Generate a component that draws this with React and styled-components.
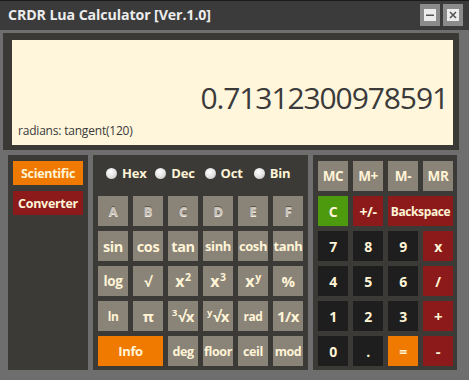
import React from 'react';
import styled, { createGlobalStyle, css } from 'styled-components';

const GlobalStyle = createGlobalStyle`
  html, body {
    margin: 0;
    padding: 0;
    background: #6e6e6e;
  }
  body {
    font-family: "Open Sans", "Noto Sans", sans-serif;
  }
`;

const Window = styled.div`
  width: 469px;
  height: 380px;
  background: #6e6e6e;
  display: flex;
  flex-direction: column;
  overflow: hidden;
`;

const TitleBar = styled.div`
  height: 30px;
  background: #3b3b3b;
  display: flex;
  align-items: center;
  justify-content: space-between;
  padding: 0 6px 0 8px;
  border-top: 1px solid #1a1a1a;
  box-sizing: border-box;
`;

const Title = styled.div`
  color: #ececec;
  font-weight: 700;
  font-size: 14.2px;
  letter-spacing: -0.1px;
  margin-top: -3px;
`;

const TitleButtons = styled.div`
  display: flex;
  gap: 3px;
  margin-top: -2px;
`;

const TitleButton = styled.div`
  width: 20px;
  height: 22px;
  background: #8b8b8b;
  display: flex;
  align-items: center;
  justify-content: center;
`;

const TitleGlyph = styled.div`
  width: 12px;
  height: 12px;
  background: #ececec;
  display: flex;
  align-items: center;
  justify-content: center;
`;

const Display = styled.div`
  margin: 3px 10px 0 3px;
  border-style: solid;
  border-color: #3a3935;
  border-width: 7px 6px 5px 9px;
  background: #fff6dc;
  height: 105px;
  display: flex;
  flex-direction: column;
  color: #3a3a3a;
`;

const Value = styled.div`
  margin-top: 43px;
  padding-right: 5px;
  text-align: right;
  font-size: 30px;
  line-height: 30px;
  letter-spacing: -1.1px;
`;

const Expression = styled.div`
  margin-top: 10px;
  padding-left: 6px;
  font-size: 12px;
  line-height: 16px;
  letter-spacing: -0.2px;
`;

const Keypad = styled.div`
  margin: 5px 12px 0 8px;
  height: 215px;
  display: flex;
  gap: 5px;
`;

const Panel = styled.div`
  background: #3b3a37;
  box-sizing: border-box;
`;

const ModePanel = styled(Panel)`
  width: 80px;
  padding: 6px 5px;
  display: flex;
  flex-direction: column;
  gap: 6px;
`;

const SciPanel = styled(Panel)`
  width: 215px;
  padding: 6px 5px;
  display: grid;
  grid-template-columns: repeat(6, 30px);
  grid-template-rows: repeat(6, 30px);
  gap: 5px;
`;

const NumPanel = styled(Panel)`
  width: 144px;
  padding: 6px 4px 4px 5px;
  display: grid;
  grid-template-columns: repeat(4, 30px);
  grid-template-rows: repeat(6, 30px);
  gap: 5px;
`;

const palette = {
  tan: '#8a8378',
  dark: '#1e1e1e',
  red: '#8c1a1a',
  orange: '#f07a00',
  green: '#4e9a0e',
};

const Key = styled.div`
  background: ${p => palette[p.$tone || 'tan']};
  color: #fff4d6;
  font-weight: 700;
  font-size: ${p => p.$size || 13}px;
  letter-spacing: -0.4px;
  display: flex;
  align-items: center;
  justify-content: center;
  white-space: nowrap;
  grid-column: span ${p => p.$span || 1};
  ${p =>
    p.$disabled &&
    css`
      color: #c8c2b8;
      text-shadow: 0 1px 0 #f0ebe2, 0 -1px 0 #5c574f;
    `}
`;

const ModeButton = styled.div`
  height: 24px;
  background: ${p => palette[p.$tone]};
  color: #fff4d6;
  font-weight: 700;
  font-size: 12.5px;
  letter-spacing: -0.3px;
  display: flex;
  align-items: center;
  justify-content: center;
`;

const RadioRow = styled.div`
  grid-column: 1 / -1;
  display: flex;
  align-items: center;
  padding: 0 0 6px 8px;
`;

const Radio = styled.label`
  width: 50px;
  display: flex;
  align-items: center;
  gap: 5px;
  color: #fff4d6;
  font-weight: 700;
  font-size: 13px;
  letter-spacing: -0.2px;
`;

const Dot = styled.span`
  width: 11px;
  height: 11px;
  border-radius: 50%;
  background: radial-gradient(circle at 40% 35%, #ffffff 0%, #e2e2e2 55%, #a9a9a9 100%);
  flex-shrink: 0;
`;

const Sup = styled.span`
  font-size: 0.66em;
  position: relative;
  top: -0.55em;
  margin-left: 1px;
`;

const PreSup = styled.span`
  font-size: 0.62em;
  position: relative;
  top: -0.6em;
  margin-right: 1px;
`;

const sciRows = [
  [
    { l: 'A', d: true }, { l: 'B', d: true }, { l: 'C', d: true },
    { l: 'D', d: true }, { l: 'E', d: true }, { l: 'F', d: true },
  ],
  [
    { l: 'sin', s: 14.5 }, { l: 'cos', s: 14.5 }, { l: 'tan', s: 14.5 },
    { l: 'sinh', s: 13 }, { l: 'cosh', s: 13 }, { l: 'tanh', s: 13 },
  ],
  [
    { l: 'log', s: 13.5 }, { l: '√', s: 14 },
    { l: <span>x<Sup>2</Sup></span>, s: 16 }, { l: <span>x<Sup>3</Sup></span>, s: 16 },
    { l: <span>x<Sup>y</Sup></span>, s: 16 }, { l: '%', s: 15 },
  ],
  [
    { l: 'ln', s: 12 }, { l: 'π', s: 15 },
    { l: <span><PreSup>3</PreSup>√x</span>, s: 15 }, { l: <span><PreSup>y</PreSup>√x</span>, s: 15 },
    { l: 'rad', s: 12 }, { l: '1/x', s: 15 },
  ],
  [
    { l: 'Info', s: 13, t: 'orange', span: 2 },
    { l: 'deg', s: 12.5 }, { l: 'floor', s: 12.5 }, { l: 'ceil', s: 12.5 }, { l: 'mod', s: 12.5 },
  ],
];

const numKeys = [
  { l: 'MC', s: 13.5 }, { l: 'M+', s: 13.5 }, { l: 'M-', s: 13.5 }, { l: 'MR', s: 13.5 },
  { l: 'C', t: 'green', s: 14 }, { l: '+/-', t: 'red', s: 14 }, { l: 'Backspace', t: 'red', span: 2, s: 12 },
  { l: '7', t: 'dark', s: 14 }, { l: '8', t: 'dark', s: 14 }, { l: '9', t: 'dark', s: 14 }, { l: 'x', t: 'red', s: 14 },
  { l: '4', t: 'dark', s: 14 }, { l: '5', t: 'dark', s: 14 }, { l: '6', t: 'dark', s: 14 }, { l: '/', t: 'red', s: 14 },
  { l: '1', t: 'dark', s: 14 }, { l: '2', t: 'dark', s: 14 }, { l: '3', t: 'dark', s: 14 }, { l: '+', t: 'red', s: 15 },
  { l: '0', t: 'dark', s: 14 }, { l: '.', t: 'dark', s: 14 }, { l: '=', t: 'orange', s: 14 }, { l: '-', t: 'red', s: 15 },
];

const App = () => {
  return (
    <Window>
      <GlobalStyle />
      <TitleBar>
        <Title>CRDR Lua Calculator [Ver.1.0]</Title>
        <TitleButtons>
          <TitleButton>
            <TitleGlyph>
              <svg width="8" height="8" viewBox="0 0 8 8">
                <rect x="0" y="3.5" width="8" height="1.5" fill="#555" />
              </svg>
            </TitleGlyph>
          </TitleButton>
          <TitleButton>
            <TitleGlyph>
              <svg width="8" height="8" viewBox="0 0 8 8">
                <path d="M1 1 L7 7 M7 1 L1 7" stroke="#555" strokeWidth="1.6" />
              </svg>
            </TitleGlyph>
          </TitleButton>
        </TitleButtons>
      </TitleBar>

      <Display>
        <Value>0.71312300978591</Value>
        <Expression>radians: tangent(120)</Expression>
      </Display>

      <Keypad>
        <ModePanel>
          <ModeButton $tone="orange">Scientific</ModeButton>
          <ModeButton $tone="red">Converter</ModeButton>
        </ModePanel>

        <SciPanel>
          <RadioRow>
            {['Hex', 'Dec', 'Oct', 'Bin'].map(b => (
              <Radio key={b}>
                <Dot />
                {b}
              </Radio>
            ))}
          </RadioRow>
          {sciRows.flat().map((k, i) => (
            <Key key={i} $size={k.s} $tone={k.t} $span={k.span} $disabled={k.d}>
              {k.l}
            </Key>
          ))}
        </SciPanel>

        <NumPanel>
          {numKeys.map((k, i) => (
            <Key key={i} $size={k.s} $tone={k.t} $span={k.span}>
              {k.l}
            </Key>
          ))}
        </NumPanel>
      </Keypad>
    </Window>
  );
};

export default App;
